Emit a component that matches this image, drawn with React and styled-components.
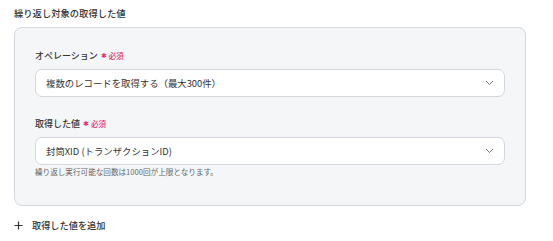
import React from "react";
import styled, { createGlobalStyle } from "styled-components";

const Global = createGlobalStyle`
  html, body { margin: 0; padding: 0; background: #fff; }
  body { font-family: "Noto Sans CJK JP", "Noto Sans", sans-serif; color: #333; }
`;

const Page = styled.div`
  padding: 8px 27px 0 14px;
  display: flex;
  flex-direction: column;
`;

const Title = styled.div`
  font-size: 9.3px;
  font-weight: 500;
  line-height: 11px;
  height: 11px;
  margin-bottom: 8px;
  color: #333;
`;

const Panel = styled.div`
  background: #f5f6f8;
  border: 1px solid #d4d8de;
  border-radius: 8px;
  padding: 20px 20px 0 20px;
  height: 179px;
  box-sizing: border-box;
  display: flex;
  flex-direction: column;
`;

const Field = styled.div`
  display: flex;
  flex-direction: column;
  margin-bottom: ${(p) => p.$gap}px;
`;

const Label = styled.div`
  display: flex;
  align-items: center;
  height: 14px;
  font-size: 9px;
  font-weight: 500;
  color: #333;
  margin-bottom: 7px;
`;

const Required = styled.span`
  color: #e8336b;
  font-size: 7.5px;
  font-weight: 500;
  margin-left: 3px;
  display: inline-flex;
  align-items: center;
  gap: 2px;
`;

const Star = styled.span`
  font-size: 7px;
  line-height: 1;
  color: #e8336b;
`;

const Select = styled.div`
  height: 28px;
  box-sizing: border-box;
  background: #fff;
  border: 1px solid #d4d8de;
  border-radius: 7px;
  display: flex;
  align-items: center;
  justify-content: space-between;
  padding: 0 10px 0 10px;
  font-size: 9.4px;
  color: #333;
`;

const Help = styled.div`
  font-size: 7.6px;
  color: #666;
  margin-top: 2px;
  line-height: 10px;
`;

const AddButton = styled.div`
  display: flex;
  align-items: center;
  gap: 9px;
  margin-top: 13px;
  font-size: 9.2px;
  font-weight: 500;
  color: #333;
  height: 12px;
`;

const Chevron = () => (
  <svg width="9" height="6" viewBox="0 0 9 6" fill="none">
    <path d="M1 1L4.5 4.5L8 1" stroke="#666" strokeWidth="0.9" />
  </svg>
);

const Plus = () => (
  <svg width="9" height="9" viewBox="0 0 9 9" fill="none">
    <path d="M4.5 0.5V8.5M0.5 4.5H8.5" stroke="#333" strokeWidth="1.2" />
  </svg>
);

export default function App() {
  return (
    <>
      <Global />
      <Page>
        <Title>繰り返し対象の取得した値</Title>
        <Panel>
          <Field $gap={19}>
            <Label>
              オペレーション
              <Required>
                <Star>✱</Star>必須
              </Required>
            </Label>
            <Select>
              <span>複数のレコードを取得する（最大300件）</span>
              <Chevron />
            </Select>
          </Field>
          <Field $gap={0}>
            <Label>
              取得した値
              <Required>
                <Star>✱</Star>必須
              </Required>
            </Label>
            <Select>
              <span>封筒XID (トランザクションID)</span>
              <Chevron />
            </Select>
            <Help>繰り返し実行可能な回数は1000回が上限となります。</Help>
          </Field>
        </Panel>
        <AddButton>
          <Plus />
          取得した値を追加
        </AddButton>
      </Page>
    </>
  );
}
